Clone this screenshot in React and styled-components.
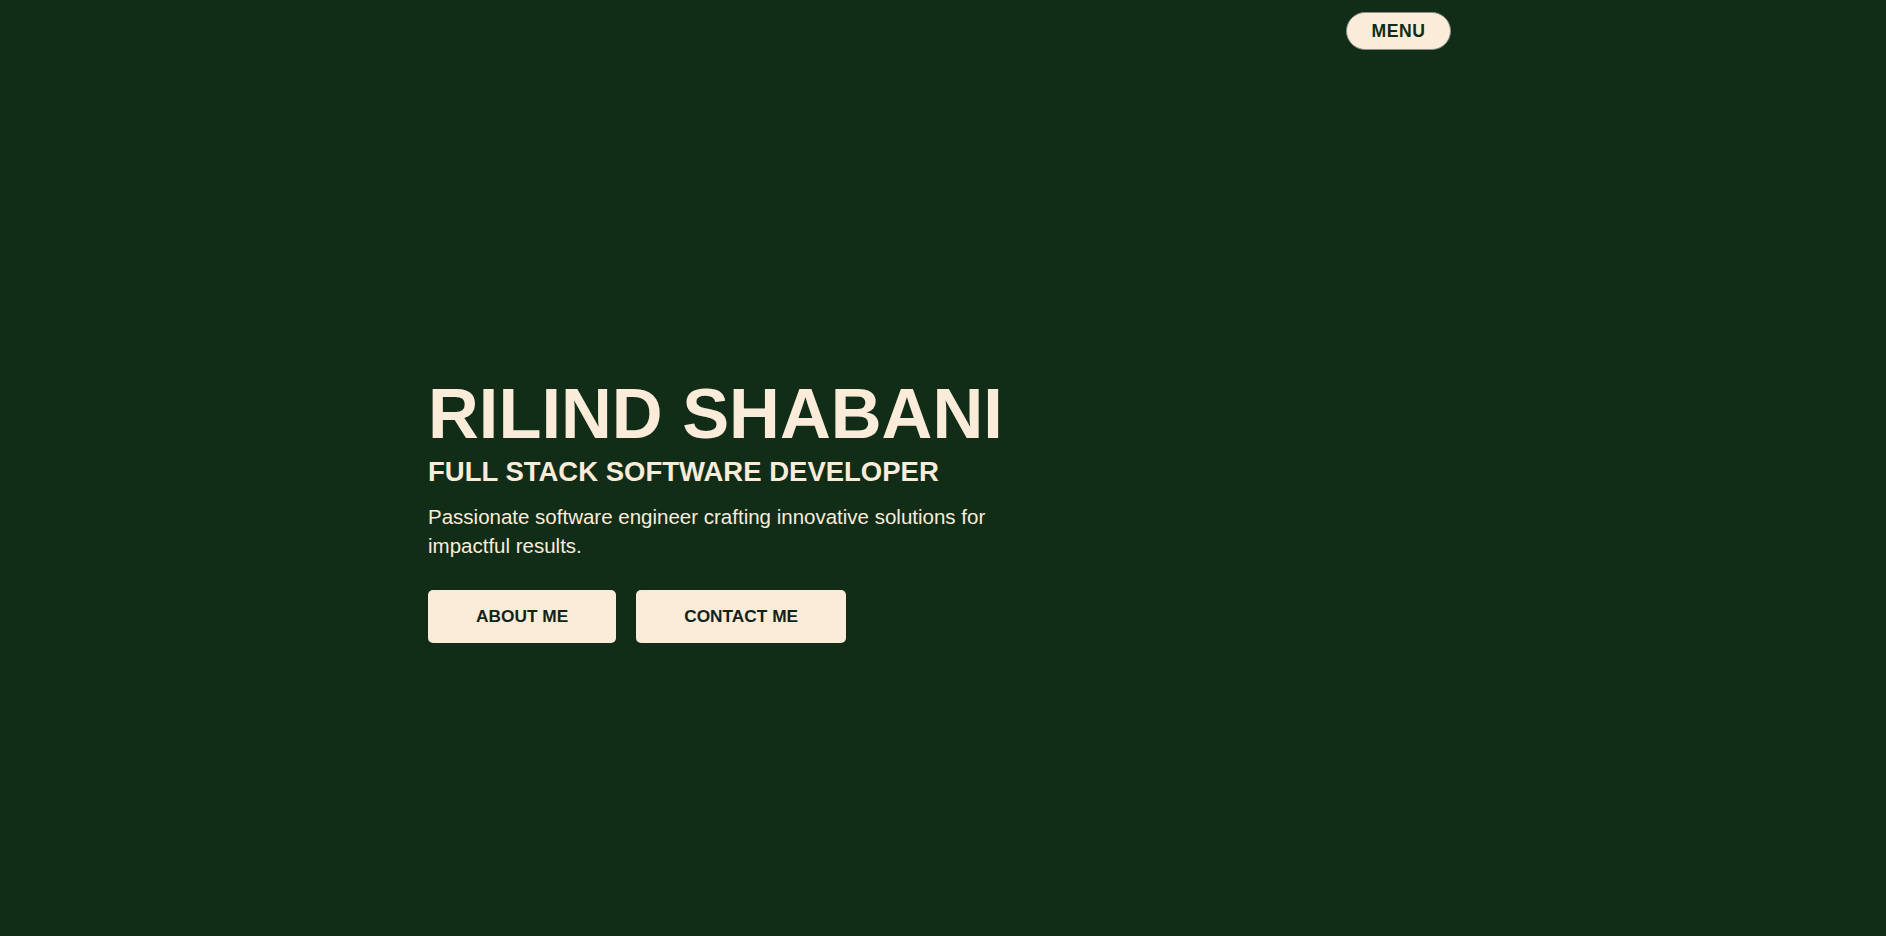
import styled, { createGlobalStyle } from 'styled-components';

const GlobalStyle = createGlobalStyle`
  * {
    box-sizing: border-box;
  }
  html,
  body {
    margin: 0;
    padding: 0;
    background: #112d18;
  }
  body {
    font-family: 'Liberation Sans', Arial, sans-serif;
    color: #faecd8;
  }
`;

const App = () => {
  return (
    <Wrapper>
      <GlobalStyle />
      <Header>
        <MenuButton>MENU</MenuButton>
      </Header>
      <Hero>
        <h1 className="name">RILIND SHABANI</h1>
        <h2 className="role">FULL STACK SOFTWARE DEVELOPER</h2>
        <p className="intro">
          Passionate software engineer crafting innovative solutions for
          impactful results.
        </p>
        <div className="actions">
          <ActionButton>ABOUT ME</ActionButton>
          <ActionButton>CONTACT ME</ActionButton>
        </div>
      </Hero>
    </Wrapper>
  );
};

const Wrapper = styled.main`
  min-height: 100vh;
  width: 100%;
  background: #112d18;
  overflow: hidden;
`;

const Header = styled.header`
  max-width: 1030px;
  margin: 0 auto;
  padding: 12px 7px 0 0;
  display: flex;
  justify-content: flex-end;
`;

const MenuButton = styled.button`
  width: 105px;
  height: 38px;
  padding-top: 2px;
  border-radius: 999px;
  border: 1px solid #8a8f86;
  background: #faecd8;
  color: #112d18;
  font-family: 'Liberation Sans', Arial, sans-serif;
  font-weight: 700;
  font-size: 17.6px;
  letter-spacing: 0.5px;
  cursor: pointer;
`;

const Hero = styled.section`
  max-width: 1030px;
  margin: 0 auto;
  padding-top: 329px;
  display: flex;
  flex-direction: column;
  align-items: flex-start;

  .name {
    margin: 0;
    font-size: 70.4px;
    line-height: 1;
    font-weight: 700;
  }
  .role {
    margin: 6px 0 0;
    font-size: 27.5px;
    line-height: 1.2;
    font-weight: 700;
  }
  .intro {
    margin: 14px 0 0;
    max-width: 600px;
    font-size: 20.5px;
    line-height: 29px;
  }
  .actions {
    display: flex;
    gap: 20px;
    margin-top: 30px;
  }
`;

const ActionButton = styled.button`
  height: 53px;
  padding: 0 48px;
  border: none;
  border-radius: 5px;
  background: #faecd8;
  color: #14231a;
  font-family: 'Liberation Sans', Arial, sans-serif;
  font-weight: 700;
  font-size: 17.3px;
  cursor: pointer;
`;

export default App;
